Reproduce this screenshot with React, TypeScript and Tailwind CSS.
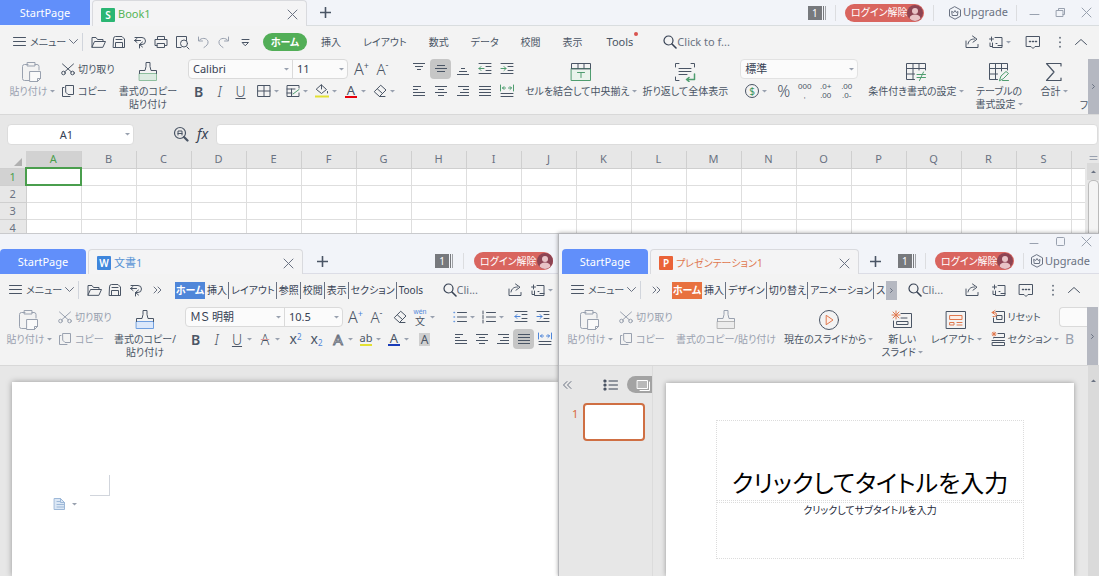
import type { ReactNode } from 'react'

const FONT = "font-['Noto_Sans','Noto_Sans_CJK_JP',sans-serif] [font-feature-settings:'palt']"

/* ---------- icons ---------- */

function Svg({ w = 16, h = 16, className = '', children }: { w?: number; h?: number; className?: string; children: ReactNode }) {
  return (
    <svg width={w} height={h} viewBox={`0 0 ${w} ${h}`} fill="none" stroke="currentColor" strokeLinecap="round" strokeLinejoin="round" className={`shrink-0 ${className}`} aria-hidden="true">
      {children}
    </svg>
  )
}

const Caret = ({ className = 'text-gray-400' }: { className?: string }) => (
  <svg width="5" height="3" viewBox="0 0 5 3" className={`inline-block shrink-0 align-middle ${className}`} aria-hidden="true">
    <path d="M0 0h5L2.500 2.500z" fill="currentColor" />
  </svg>
)

const Burger = () => <Svg w={13} h={12}><path d="M.5 1.500h12M.5 5.500h12M.5 9.500h12" /></Svg>
const ChevDown = () => <Svg w={9} h={6} className="text-gray-500"><path d="M.5.5l4 4 4-4" /></Svg>
const Folder = () => <Svg><path d="M2 13V3.500h4l1.500 2H13V7.500M2 13l2.500-5.500h11L13 13z" /></Svg>
const Save = () => <Svg><path d="M2.500 4.500a2 2 0 0 1 2-2h6.500l2.500 2.500v8.500h-11zM4.500 13.500v-5h7v5M5 5.500h6" /></Svg>
const Export = () => <Svg><path d="M3 3.500h7a3 3 0 0 1 0 7H8M8.500 6.500h-6M5 4.500l-2.500 2 2.500 2M10.500 8l-3 2.500 3 2.500M7.500 14v-3.500" /></Svg>
const Print = () => <Svg><path d="M4.500 5.500v-3h7v3M4 11.500H2v-6h12v6h-2M4.500 9.500h7v4h-7z" /></Svg>
const Preview = () => <Svg><path d="M7 13.500H2.500v-11h10v4M13 13l2 2" /><circle cx="10" cy="9.500" r="3.500" /></Svg>
const Undo = () => <Svg className="text-gray-400"><path d="M3.500 3v4h4M4 6.500c2-3 8-3 9 1 .5 2.500-1.500 4.500-4 6" /></Svg>
const Redo = () => <Svg className="text-gray-400"><path d="M12.500 3v4h-4M12 6.500c-2-3-8-3-9 1-.5 2.500 1.500 4.500 4 6" /></Svg>
const MoreDown = () => <Svg><path d="M5 5.500h7M5.500 8.500h6l-3 3z" /></Svg>
const DoubleRight = () => <Svg className="text-gray-500"><path d="M5 5l3 3-3 3M9 5l3 3-3 3" /></Svg>
const DoubleLeft = () => <Svg className="text-gray-500"><path d="M7 4.500L3.500 8 7 11.500M11 4.500L7.500 8l3.500 3.500" /></Svg>
const Magnifier = () => <Svg w={14} h={14} className="text-gray-700"><circle cx="5.500" cy="5.500" r="4.500" strokeWidth="1.200" /><path d="M9 9l4 4" strokeWidth="1.600" /></Svg>
const Share = () => <Svg><path d="M2 7v6.500h12v-3M4 10c.5-3.500 3-5 6.500-5M8.500 2l4.500 3.200-4 3" /></Svg>
const CloudAdd = () => <Svg><path d="M7 3.500h7v10H4.500V9M1.500 5h4M3.500 3v4M10 11.500h4M8 9.500h1M2 9v3.500h2.500" /></Svg>
const Chat = () => <Svg w={18} h={17}><path d="M2.500 2.500h13v10H11l-2 2-2-2H2.500z" /><path d="M5.500 7.500h1M8.500 7.500h1M11.500 7.500h1" strokeWidth="1.500" /></Svg>
const Dots = () => <Svg><path d="M8 3.500v.5M8 8v.5M8 12.500v.5" strokeWidth="1.500" /></Svg>
const ChevUp = () => <Svg><path d="M2.500 10.500L8 5.500l5.500 5" /></Svg>
const Close = ({ className = 'text-gray-500' }: { className?: string }) => <Svg w={11} h={11} className={className}><path d="M1 1l9 9M10 1l-9 9" /></Svg>
const Plus = () => <Svg w={11} h={11} className="text-gray-600"><path d="M5.500.5v10M.5 5.500h10" strokeWidth="1.600" /></Svg>
const Hexagon = () => <Svg w={14} h={14}><path d="M7 .8l5.500 3v6.400L7 13.200 1.500 10.200V3.800z" /><path d="M4 5.500l1.700 1L7 4.500l1.300 2 1.700-1-.6 4H4.600z" /></Svg>

const Clipboard = () => (
  <Svg w={22} h={22}>
    <path d="M7 3.500H3.500a2 2 0 0 0-2 2v12a2 2 0 0 0 2 2H8M14 3.500h2a2 2 0 0 1 2 2V9" />
    <path d="M6.500 1.500h7.500v3.500H6.500z" />
    <path d="M9 10.500h10.500v7l-3 3H9z" fill="#fafafa" />
    <path d="M19.500 17.500h-3v3" />
  </Svg>
)
const Cut = () => <Svg><path d="M2.500 3l9 8M13.500 3l-9 8" /><circle cx="3.500" cy="12" r="1.800" /><circle cx="12.500" cy="12" r="1.800" /></Svg>
const Copy = () => <Svg><path d="M6 2.500h7.500v9H8l-2-2zM4 4.500H2.500v9H10" /></Svg>

function Brush({ fill, edge }: { fill: string; edge: string }) {
  return (
    <Svg w={22} h={22}>
      <path d="M2.500 12.500h17v7h-17z" fill={fill} stroke={edge} />
      <path d="M2.500 12.500v-3H8l1-4V1.500h4v4l1 4h5.500v3" />
    </Svg>
  )
}

/* each row is [from, to] on a 14px wide box */
function Lines({ rows, top = 2, step = 3 }: { rows: number[][]; top?: number; step?: number }) {
  return (
    <Svg w={14} h={14}>
      {rows.map(([a, b], i) => <path key={i} d={`M${a} ${top + 0.5 + i * step}H${b}`} strokeLinecap="butt" />)}
    </Svg>
  )
}
const AlignTop = () => <Lines rows={[[1, 13], [3, 11], [5, 9]]} top={1} />
const AlignMiddle = () => <Lines rows={[[3, 11], [1, 13], [3, 11]]} top={3} />
const AlignBottom = () => <Lines rows={[[5, 9], [3, 11], [1, 13]]} top={6} />
const AlignLeft = () => <Lines rows={[[1, 9], [1, 6], [1, 13], [1, 13]]} />
const AlignCenter = () => <Lines rows={[[1, 13], [4, 10], [1, 13], [4, 10]]} />
const AlignRight = () => <Lines rows={[[2, 13], [7, 13], [4, 13], [1, 13]]} />
const Justify = () => <Lines rows={[[1, 13], [1, 13], [1, 13], [1, 13]]} />
const Distribute = ({ tint }: { tint: string }) => (
  <Svg w={14} h={14}><g stroke={tint}><path d="M.5 1v6M13.500 1v6M2.500 4h3M8.500 4h3M4 2.500L2.500 4 4 5.500M10 2.500l1.500 1.500L10 5.500" /></g><path d="M1 9.500h12M1 12.500h12" /></Svg>
)
const Indent = ({ tint, out = false }: { tint: string; out?: boolean }) => (
  <Svg w={14} h={14}>
    <path d="M1 1.500h12M8 4.500h5M8 8.500h5M1 11.500h12" />
    <path d={out ? 'M6 6.500H1M3 4.500l-2 2 2 2' : 'M1 6.500h5M4 4.500l2 2-2 2'} stroke={tint} />
  </Svg>
)
const Bullets = () => <Svg w={14} h={14}><path d="M4.500 2.500h9M4.500 7h9M4.500 11.500h9" /><path d="M1 2.500h.5M1 7h.5M1 11.500h.5" stroke="#6b9be0" strokeWidth="1.500" /></Svg>
const Numbers = () => <Svg w={14} h={14}><path d="M4.500 2.500h9M4.500 7h9M4.500 11.500h9M1 1v3M1 5.500v3M1 10v3" /></Svg>
const Borders = () => <Svg w={14} h={14}><path d="M1 1.500h12v11H1zM7 1.500v11M1 7h12" /></Svg>
const CellStyle = () => <Svg w={14} h={14}><path d="M13 4v-2.500H1v11h12V9M1 5h8M5.500 12.500V5M1 9h5" /><path d="M7 10l6-4.500" stroke="#4f9d6f" /></Svg>
const Bucket = () => <Svg w={14} h={14}><path d="M6.500 1l5 4.500-5 4-5-4zM6.500 1v4M12.500 7.500v1.500" /><path d="M0 12.500h14" stroke="#e3e033" strokeWidth="2" strokeLinecap="butt" /></Svg>
const Rubber = () => <Svg w={14} h={14}><path d="M8 1.500l5 4.500-6.500 6.500L1.500 8zM4.500 5l5 4.500M6.500 12.500H12" /></Svg>

const MergeCells = () => (
  <Svg w={22} h={20}><g stroke="#4f9d6f"><path d="M1.500 6.500h19v12h-19z" fill="#eaf4ec" /><path d="M7.500 10.500h7M11 10.500v5" /></g><path d="M1.500 6.500v-5h19v5zM8 1.500v5M14 1.500v5" /></Svg>
)
const WrapText = () => (
  <Svg w={22} h={20}><path d="M1.500 5V1.500H5M17 1.500h3.500V5M1.500 15v3.500H5M5 6.500h12M5 9.500h12M5 12.500h8" /><path d="M20.500 12v5.500H13M15 15.500l-2.500 2 2.500 2" stroke="#4f9d6f" strokeWidth="1.500" /></Svg>
)
const CondFormat = () => (
  <Svg w={22} h={20}><path d="M20.500 8V1.500h-19v16h8M1.500 6.500h19M8 1.500v16M1.500 12h8M14 1.500V8" /><path d="M12 12.500h8.500M12 15.500h8.500M18.500 10l-4 8.500" stroke="#4f9d6f" /></Svg>
)
const TableFormat = () => (
  <Svg w={22} h={20}><path d="M19.500 8V1.500h-18v16h8M1.500 6.500h18M7.500 1.500v16M1.500 12h8M13.500 1.500V9" /><path d="M11.500 18.500l1.500-4.500 5-4.500 2.500 2-5 5zM14.500 18.500h6" stroke="#4f9d6f" /></Svg>
)
const Sum = () => <Svg w={18} h={20}><path d="M16 4V1.500H1.500L9 10l-7.500 8.500H16V16" strokeWidth="1.200" /></Svg>
const Play = () => <Svg w={22} h={22}><circle cx="11" cy="11" r="9.500" /><path d="M8.500 6.500l6.500 4.500-6.500 4.500z" stroke="#e0784e" fill="#fdeee7" /></Svg>
const NewSlide = () => (
  <Svg w={22} h={20}><path d="M10 3.500h10.500v14h-18V11M10 8h6M6 11.500h11v3H6z" /><path d="M5 1v8M1 5h8M2 2l6 6M8 2L2 8" stroke="#e0784e" /></Svg>
)
const LayoutIcon = () => (
  <Svg w={22} h={20}><path d="M1.500 1.500h19v17h-19z" /><g stroke="#e0784e"><path d="M5 5.500h12v4H5z" fill="#fdeee7" /><path d="M5 12.500h4v2.500H5zM12 12.500h5M12 15h5" /></g></Svg>
)
const Reset = () => <Svg><path d="M6 2.500h8.500v11h-11V9M7 6.500h5v4H7z" /><path d="M5 1.500l-3 2 3 2M2 3.500h2.500a2 2 0 0 1 0 4H3" stroke="#e0784e" /></Svg>
const Section = () => <Svg><path d="M8 2.500h6.500v4H3.500V7M2 9.500h12.500M2.500 11.500h12v3h-12z" /><path d="M4 1v4M2 3h4M2.500 1.500l3 3M5.500 1.500l-3 3" stroke="#e0784e" /></Svg>
const Outline = () => (
  <Svg w={15} h={12}><g strokeWidth="1.200"><circle cx="2" cy="2" r="1" /><circle cx="2" cy="6" r="1" /><circle cx="2" cy="10" r="1" /></g><path d="M6 2h8.500M6 6h8.500M6 10h8.500" /></Svg>
)
const FindCell = () => <Svg><circle cx="7" cy="7" r="5.500" strokeWidth="1.200" /><path d="M5 9V5h4v4M5 7.500h4" /><path d="M11 11l3.500 3.500" strokeWidth="2.200" /></Svg>

/* ---------- shared pieces ---------- */

function IconButton({ label, active = false, children }: { label: string; active?: boolean; children: ReactNode }) {
  return (
    <button aria-label={label} className={`flex h-5 w-[21px] shrink-0 items-center justify-center rounded-sm text-gray-600 ${active ? 'bg-[#c6c6c6]' : ''}`}>
      {children}
    </button>
  )
}

function SplitButton({ label, children }: { label: string; children: ReactNode }) {
  return (
    <button aria-label={label} className="flex h-5 w-7 shrink-0 items-center gap-[2px] text-gray-600">
      <span className="flex w-4 justify-center">{children}</span>
      <Caret />
    </button>
  )
}

function BigButton({ icon, lines, caret = false, disabled = false, className = '' }: { icon: ReactNode; lines: string[]; caret?: boolean; disabled?: boolean; className?: string }) {
  return (
    <button disabled={disabled} className={`flex shrink-0 flex-col items-center whitespace-nowrap ${disabled ? 'text-gray-400' : 'text-gray-600'} ${className}`}>
      <span className="flex h-[26px] items-center">{icon}</span>
      {lines.map((line, i) => (
        <span key={line} className="text-[10px] leading-[13px]">
          {line}
          {caret && i === lines.length - 1 && <Caret className="mb-[2px] ml-[2px] text-gray-400" />}
        </span>
      ))}
    </button>
  )
}

function ClipGroup({ disabled = false }: { disabled?: boolean }) {
  const tone = disabled ? 'text-gray-400' : 'text-gray-600'
  return (
    <div className="ml-[6px] flex w-[58px] shrink-0 flex-col gap-[2px] whitespace-nowrap">
      <button disabled={disabled} className={`flex h-5 items-center gap-[2px] text-[10px] ${tone}`}><Cut />切り取り</button>
      <button disabled={disabled} className={`flex h-5 items-center gap-[2px] text-[10px] ${tone}`}><Copy />コピー</button>
    </div>
  )
}

function Picker({ label, value, className = '' }: { label: string; value: string; className?: string }) {
  return (
    <label className={`relative flex h-5 items-center ${className}`}>
      <select aria-label={label} className="h-full w-full appearance-none bg-transparent pl-1 text-[11px] text-gray-700 outline-none">
        <option>{value}</option>
      </select>
      <span className="pointer-events-none absolute inset-y-0 right-[3px] flex items-center"><Caret /></span>
    </label>
  )
}

function FontPickers({ font, size, first, second }: { font: string; size: string; first: string; second: string }) {
  return (
    <div className="flex rounded border border-[#dadada] bg-[#fbfbfb]">
      <Picker label="フォント" value={font} className={`-my-px border-r border-[#dadada] ${first}`} />
      <Picker label="サイズ" value={size} className={`-my-px ${second}`} />
    </div>
  )
}

const Letter = ({ children, className = 'text-[14px] leading-[14px]' }: { children: ReactNode; className?: string }) => (
  <span className={`font-['Noto_Sans'] ${className}`}>{children}</span>
)

const GrowFont = ({ tint }: { tint: string }) => (
  <span className="flex items-start"><Letter className="text-[16px] leading-4 font-light">A</Letter><span className={`text-[9px] leading-[9px] ${tint}`}>+</span></span>
)
const ShrinkFont = () => (
  <span className="flex items-start"><Letter className="text-[15px] leading-4 font-light">A</Letter><span className="text-[9px] leading-[7px]">-</span></span>
)

/* two short rows of digits */
const Digits = ({ top, bottom }: { top: string; bottom: string }) => (
  <span className="flex flex-col font-['Liberation_Sans'] text-[8px] leading-[9px]"><span>{top}</span><span>{bottom}</span></span>
)

const MenuButton = () => (
  <button className="flex h-[18px] w-[70px] shrink-0 items-center border-r border-gray-300 text-[10px] whitespace-nowrap text-gray-600">
    <Burger />
    <span className="mr-[3px] ml-1">メニュー</span>
    <ChevDown />
  </button>
)

function SearchBox({ hint, width }: { hint: string; width: string }) {
  return (
    <label className="flex shrink-0 items-center">
      <Magnifier />
      <input aria-label="検索" placeholder={hint} className={`bg-transparent text-[11px] outline-none placeholder:text-gray-500 ${width}`} />
    </label>
  )
}

const StartTab = ({ className }: { className: string }) => (
  <button className={`h-[25px] shrink-0 bg-[#618ffa] pt-[2px] text-[11px] text-white ${className}`}>StartPage</button>
)

function FileTab({ mark, name, logo, tone, width }: { mark: string; name: string; logo: string; tone: string; width: string }) {
  return (
    <div className={`ml-[2px] flex h-[25px] shrink-0 items-center rounded-t-sm border border-b-0 border-[#d9dade] bg-[#f4f4f5] px-2 pt-[2px] ${width}`}>
      <span className={`flex size-[14px] items-center justify-center rounded-[1px] font-['Noto_Sans'] text-[10px] leading-none font-semibold text-white ${logo}`}>{mark}</span>
      <a href="#" className={`ml-[3px] whitespace-nowrap ${tone}`}>{name}</a>
      <button aria-label="閉じる" className="ml-auto"><Close /></button>
    </div>
  )
}

const Badge = () => (
  <button className="flex h-[14px] shrink-0 items-center gap-px text-[10px] leading-[14px] text-white">
    <span className="w-[14px] bg-[#77797d] text-center">1</span>
    <span className="h-full w-px bg-[#77797d]" />
    <span className="h-full w-px bg-[#a0a2a6]" />
  </button>
)

const LoginButton = () => (
  <button className="flex h-[18px] w-[79px] shrink-0 items-center justify-between rounded-full bg-[#d9655f] pr-px pl-[6px] text-[10px] whitespace-nowrap text-white">
    ログイン解除
    <svg width="16" height="16" viewBox="0 0 16 16" className="shrink-0" aria-hidden="true">
      <circle cx="8" cy="8" r="8" fill="#8d4453" />
      <circle cx="8" cy="6" r="3" fill="#e9c3c6" />
      <path d="M2.500 13.500c.5-3 2.500-4 5.500-4s5 1 5.500 4A8 8 0 0 1 8 16a8 8 0 0 1-5.500-2.500z" fill="#e9c3c6" />
    </svg>
  </button>
)

const Rule = ({ className = '' }: { className?: string }) => <span className={`h-4 w-px shrink-0 bg-[#dcdde0] ${className}`} />

const Upgrade = () => (
  <a href="#" className="flex items-center gap-px text-[11px] text-gray-500"><Hexagon />Upgrade</a>
)

const ScrollRight = ({ className = '' }: { className?: string }) => (
  <button aria-label="次へ" className={`flex w-[11px] shrink-0 items-center justify-center bg-[#b5b8c1] text-gray-500 ${className}`}>
    <Svg w={5} h={7}><path d="M1.500 1.500l2 2-2 2" /></Svg>
  </button>
)

function RibbonTabs({ tabs, fill }: { tabs: string[]; fill: string }) {
  return (
    <nav className="flex shrink-0 items-center text-[10px] leading-[17px] whitespace-nowrap text-gray-700">
      <button className={`h-[17px] w-[30px] font-bold text-white ${fill}`}>ホーム</button>
      {tabs.map((t, i) => (
        <button key={t} className={`h-[17px] pr-px pl-[2px] ${i < tabs.length - 1 ? 'border-r border-gray-500' : ''}`}>{t}</button>
      ))}
    </nav>
  )
}

/* ---------- spreadsheet ---------- */

const COLUMNS = 'ABCDEFGHIJKLMNOPQRS'.split('')
const SHEET_TABS = ['挿入', 'レイアウト', '数式', 'データ', '校閲', '表示']

function Spreadsheet() {
  return (
    <section className="flex h-[233px] shrink-0 flex-col overflow-hidden bg-[#f3f3f3]">
      <header className="flex h-[26px] shrink-0 items-end bg-[#f2f4f9]">
        <StartTab className="mb-px w-[90px]" />
        <FileTab mark="S" name="Book1" logo="bg-[#2bb673]" tone="text-[11px] text-[#55b455]" width="h-[26px] w-[215px]" />
        <div className="flex h-[26px] flex-1 items-center border-b border-[#d9dddf]">
          <button aria-label="新規" className="flex w-[37px] justify-center"><Plus /></button>
          <div className="ml-auto flex items-center">
            <Badge />
            <Rule className="mx-[9px]" />
            <LoginButton />
            <Rule className="mr-[14px] ml-[9px]" />
            <Upgrade />
            <Rule className="ml-2" />
            <div className="ml-1 flex text-gray-400">
              <button aria-label="最小化" className="flex w-[26px] items-center justify-center"><Svg w={11} h={11}><path d="M1 7.500h9" /></Svg></button>
              <button aria-label="元に戻す" className="flex w-[26px] items-center justify-center"><Svg w={11} h={11}><path d="M1.500 3.500h6.500v6H1.500zM3.500 3.500v-2h6v6H8" /></Svg></button>
              <button aria-label="閉じる" className="flex w-[26px] items-center justify-center"><Close className="text-gray-400" /></button>
            </div>
          </div>
        </div>
      </header>

      <div className="flex h-8 shrink-0 items-center pl-[13px] text-gray-600">
        <MenuButton />
        <div className="ml-1 flex">
          <IconButton label="開く"><Folder /></IconButton>
          <IconButton label="保存"><Save /></IconButton>
          <IconButton label="エクスポート"><Export /></IconButton>
          <IconButton label="印刷"><Print /></IconButton>
          <IconButton label="プレビュー"><Preview /></IconButton>
          <IconButton label="元に戻す"><Undo /></IconButton>
          <IconButton label="やり直し"><Redo /></IconButton>
          <IconButton label="その他"><MoreDown /></IconButton>
        </div>
        <nav className="ml-2 flex items-center gap-[22px] text-[10px] whitespace-nowrap text-gray-600">
          <button className="-mr-2 h-[18px] w-11 rounded-full bg-[#52ae57] font-bold text-white">ホーム</button>
          {SHEET_TABS.map((t) => <button key={t}>{t}</button>)}
          <button className="relative ml-[2px] text-[11px]">
            Tools
            <span className="absolute -top-[2px] -right-[5px] size-1 rounded-full bg-[#d9534f]" />
          </button>
        </nav>
        <div className="ml-[30px]"><SearchBox hint="Click to f..." width="w-[60px]" /></div>
        <div className="mr-2 ml-auto flex items-center gap-[6px]">
          <IconButton label="共有"><Share /></IconButton>
          <SplitButton label="クラウド"><CloudAdd /></SplitButton>
          <IconButton label="コメント"><Chat /></IconButton>
          <div className="flex">
            <IconButton label="オプション"><Dots /></IconButton>
            <IconButton label="リボンを隠す"><ChevUp /></IconButton>
          </div>
        </div>
      </div>

      <div className="flex h-[57px] shrink-0 items-start border-b border-[#d8d8d8] pt-px pl-[10px]">
        <BigButton icon={<Clipboard />} lines={['貼り付け']} caret disabled className="w-11" />
        <ClipGroup />
        <BigButton icon={<Brush fill="#dcebe1" edge="#8fbf9f" />} lines={['書式のコピー', '貼り付け']} className="w-[60px]" />
        <div className="ml-[10px] flex flex-col gap-[2px]">
          <div className="flex items-center">
            <FontPickers font="Calibri" size="11" first="w-[104px]" second="w-[54px]" />
            <div className="w-[3px]" />
            <IconButton label="拡大"><GrowFont tint="" /></IconButton>
            <IconButton label="縮小"><ShrinkFont /></IconButton>
          </div>
          <div className="flex items-center">
            <IconButton label="太字"><Letter className="text-[14px] font-semibold">B</Letter></IconButton>
            <IconButton label="斜体"><Letter className="text-[14px] font-light italic">I</Letter></IconButton>
            <IconButton label="下線"><Letter className="text-[14px] font-light underline">U</Letter></IconButton>
            <div className="ml-[5px] flex gap-px">
              <SplitButton label="罫線"><Borders /></SplitButton>
              <SplitButton label="セルのスタイル"><CellStyle /></SplitButton>
              <SplitButton label="塗りつぶし"><Bucket /></SplitButton>
              <SplitButton label="文字の色"><Letter className="border-b-2 border-red-600 px-[2px] text-[13px] leading-[12px]">A</Letter></SplitButton>
              <SplitButton label="クリア"><Rubber /></SplitButton>
            </div>
          </div>
        </div>
        <div className="ml-2 grid grid-cols-5 gap-x-px gap-y-[2px]">
          <IconButton label="上揃え"><AlignTop /></IconButton>
          <IconButton label="上下中央" active><AlignMiddle /></IconButton>
          <IconButton label="下揃え"><AlignBottom /></IconButton>
          <IconButton label="インデント解除"><Indent tint="#4f9d6f" out /></IconButton>
          <IconButton label="インデント"><Indent tint="#4f9d6f" /></IconButton>
          <IconButton label="左揃え"><AlignLeft /></IconButton>
          <IconButton label="中央揃え"><AlignCenter /></IconButton>
          <IconButton label="右揃え"><AlignRight /></IconButton>
          <IconButton label="両端揃え"><Justify /></IconButton>
          <IconButton label="均等割り付け"><Distribute tint="#4f9d6f" /></IconButton>
        </div>
        <div className="ml-2 flex gap-[6px]">
          <BigButton icon={<MergeCells />} lines={['セルを結合して中央揃え']} caret />
          <BigButton icon={<WrapText />} lines={['折り返して全体表示']} />
        </div>
        <div className="ml-3 flex flex-col gap-[2px]">
          <div className="rounded border border-[#e2e2e2] bg-[#fbfbfb]">
            <Picker label="表示形式" value="標準" className="-my-px w-[116px]" />
          </div>
          <div className="flex items-center pl-1">
            <div className="flex w-[29px]">
              <SplitButton label="通貨">
                <span className="flex size-[14px] items-center justify-center rounded-full border border-gray-600 text-[10px] leading-none text-[#3f9560]">$</span>
              </SplitButton>
            </div>
            <IconButton label="パーセント"><Letter className="text-[16px] font-light">%</Letter></IconButton>
            <IconButton label="桁区切り"><Digits top="000" bottom="," /></IconButton>
            <IconButton label="小数点以下を増やす"><Digits top=".0+" bottom=".00" /></IconButton>
            <IconButton label="小数点以下を減らす"><Digits top=".00" bottom=".0-" /></IconButton>
          </div>
        </div>
        <div className="ml-[10px] flex min-w-0 flex-1 gap-3">
          <BigButton icon={<CondFormat />} lines={['条件付き書式の設定']} caret />
          <BigButton icon={<TableFormat />} lines={['テーブルの', '書式設定']} caret />
          <BigButton icon={<Sum />} lines={['合計']} caret className="ml-[6px]" />
          <span className="mt-10 ml-auto text-[10px] leading-[13px] text-gray-600">フ</span>
        </div>
        <ScrollRight className="h-[55px]" />
      </div>

      <div className="flex h-9 shrink-0 items-center bg-[#e7e7e7] pt-[2px] pr-px pl-[7px]">
        <label className="relative flex w-[127px] shrink-0 items-center">
          <input aria-label="名前ボックス" defaultValue="A1" className="h-[21px] w-full rounded border border-[#dcdcdc] bg-white pr-2 text-center text-[11px] text-gray-700 outline-none" />
          <span className="absolute right-1 flex"><Caret /></span>
        </label>
        <button aria-label="セルを検索" className="ml-[39px] text-gray-600"><FindCell /></button>
        <button aria-label="関数の挿入" className="mx-2 font-['Noto_Sans'] text-[14px] leading-none text-gray-700 italic">fx</button>
        <input aria-label="数式バー" className="h-[21px] min-w-0 flex-1 rounded border border-[#dcdcdc] bg-white px-1 text-[11px] outline-none" />
      </div>

      <div className="flex min-h-0 flex-1 bg-[#e7e7e7]">
        <div className="min-w-0 flex-1 overflow-hidden">
          <table className="w-full table-fixed border-collapse bg-white text-[11px] leading-4 text-gray-500">
            <thead>
              <tr className="h-[17px] bg-[#e7e7e7]">
                <th aria-label="すべて選択" className="w-[26px] border-b border-[#cfcfcf]">
                  <svg width="8" height="8" viewBox="0 0 8 8" className="mt-[5px] mr-1 ml-auto" aria-hidden="true"><path d="M8 0v8H0z" fill="#b0b0b0" /></svg>
                </th>
                {COLUMNS.map((c, i) => (
                  <th key={c} className={`w-[55px] border-r border-b border-[#cfcfcf] font-normal ${i === 0 ? 'bg-[#d2d2d2] text-[#4a9e4d]' : ''}`}>{c}</th>
                ))}
                <th className="border-b border-[#cfcfcf]" />
              </tr>
            </thead>
            <tbody>
              {[1, 2, 3, 4].map((r) => (
                <tr key={r} className="h-[17px]">
                  <th className={`border-r border-b border-[#cfcfcf] font-normal ${r === 1 ? 'bg-[#d2d2d2] text-[#4a9e4d]' : 'bg-[#e7e7e7]'}`}>{r}</th>
                  {COLUMNS.map((c, i) => (
                    <td key={c} className={`border-r border-b border-[#dedede] ${r === 1 && i === 0 ? 'outline-2 -outline-offset-1 outline-[#4a9e4d]' : ''}`} />
                  ))}
                  <td className="border-b border-[#dedede]" />
                </tr>
              ))}
            </tbody>
          </table>
        </div>
        <div className="ml-[2px] flex w-3 shrink-0 flex-col items-center text-gray-400">
          <Svg w={9} h={12}><path d="M1 5.500h7M1 8.500h7" /></Svg>
          <button aria-label="上へスクロール" className="flex h-[17px] w-full items-center justify-center bg-[#dadada]"><Caret className="rotate-180 text-gray-500" /></button>
          <div className="w-[11px] flex-1 rounded-t-[5px] border border-b-0 border-[#bbb] bg-[#f4f4f4]" />
        </div>
      </div>
    </section>
  )
}

/* ---------- writer ---------- */

function Writer() {
  return (
    <section className="flex min-w-0 flex-col overflow-hidden border-t border-[#c9cacd] bg-[#f3f3f3]">
      <header className="flex h-10 shrink-0 items-end bg-[#f2f4f9]">
        <StartTab className="w-[86px] rounded-t-sm" />
        <FileTab mark="W" name="文書1" logo="bg-[#3f86dc]" tone="text-[11px] text-[#5a95d6]" width="w-[215px]" />
        <div className="flex h-[25px] flex-1 items-center border-b border-[#dcdde6]">
          <button aria-label="新規" className="flex w-[38px] justify-center"><Plus /></button>
          <div className="mr-[5px] ml-auto flex items-center">
            <Badge />
            <Rule className="mx-[10px]" />
            <LoginButton />
          </div>
        </div>
      </header>

      <div className="flex h-8 shrink-0 items-center pl-[9px] text-gray-600">
        <MenuButton />
        <div className="ml-1 flex">
          <IconButton label="開く"><Folder /></IconButton>
          <IconButton label="保存"><Save /></IconButton>
          <IconButton label="エクスポート"><Export /></IconButton>
          <IconButton label="その他"><DoubleRight /></IconButton>
        </div>
        <div className="w-2" />
        <RibbonTabs tabs={['挿入', 'レイアウト', '参照', '校閲', '表示', 'セクション', 'Tools']} fill="bg-[#4f86d9]" />
        <div className="ml-auto"><SearchBox hint="Cli..." width="w-[30px]" /></div>
        <div className="ml-auto flex items-center gap-1">
          <IconButton label="共有"><Share /></IconButton>
          <SplitButton label="クラウド"><CloudAdd /></SplitButton>
        </div>
      </div>

      <div className="flex h-[60px] shrink-0 items-start border-b border-[#d8d8d8] pt-px pl-[7px]">
        <BigButton icon={<Clipboard />} lines={['貼り付け']} caret disabled className="w-11" />
        <ClipGroup disabled />
        <BigButton icon={<Brush fill="#dbe8fb" edge="#6f9fe0" />} lines={['書式のコピー/', '貼り付け']} className="w-[60px]" />
        <div className="ml-[10px] flex flex-col gap-[2px]">
          <div className="flex items-center">
            <FontPickers font="ＭＳ 明朝" size="10.5" first="w-[99px]" second="w-[57px]" />
            <div className="w-[2px]" />
            <IconButton label="拡大"><GrowFont tint="text-[#4f86d9]" /></IconButton>
            <IconButton label="縮小"><ShrinkFont /></IconButton>
            <div className="w-[2px]" />
            <IconButton label="クリア"><Rubber /></IconButton>
            <div className="w-[2px]" />
            <SplitButton label="ルビ">
              <span className="flex flex-col items-center"><span className="h-[7px] font-['Liberation_Sans'] text-[7px] leading-[7px] text-[#4f86d9]">wén</span><span className="h-[11px] text-[10px] leading-[12px]">文</span></span>
            </SplitButton>
          </div>
          <div className="flex items-center">
            <IconButton label="太字"><Letter className="text-[14px] font-semibold">B</Letter></IconButton>
            <IconButton label="斜体"><Letter className="text-[14px] font-light italic">I</Letter></IconButton>
            <div className="w-[2px]" />
            <SplitButton label="下線"><Letter className="text-[14px] font-light underline">U</Letter></SplitButton>
            <SplitButton label="取り消し線"><Letter className="text-[14px] font-light line-through decoration-[#d99]">A</Letter></SplitButton>
            <IconButton label="上付き"><Letter>x<sup className="text-[8px] text-[#4f86d9]">2</sup></Letter></IconButton>
            <IconButton label="下付き"><Letter>x<sub className="text-[8px] text-[#4f86d9]">2</sub></Letter></IconButton>
            <div className="w-[3px]" />
            <SplitButton label="文字の効果"><Letter className="text-[15px] text-white [-webkit-text-stroke:1px_#6b7280]">A</Letter></SplitButton>
            <SplitButton label="蛍光ペン"><Letter className="border-b-2 border-[#e3e033] text-[11px] leading-[12px]">ab</Letter></SplitButton>
            <SplitButton label="文字の色"><Letter className="border-b-2 border-blue-800 px-[2px] text-[13px] leading-[12px]">A</Letter></SplitButton>
            <IconButton label="文字の網かけ"><Letter className="bg-[#cfcfcf] px-[2px] text-[12px] leading-[13px]">A</Letter></IconButton>
          </div>
        </div>
        <div className="ml-[10px] flex flex-col gap-[2px]">
          <div className="flex items-center gap-px pl-[2px]">
            <SplitButton label="箇条書き"><Bullets /></SplitButton>
            <SplitButton label="段落番号"><Numbers /></SplitButton>
            <IconButton label="インデント解除"><Indent tint="#4f86d9" out /></IconButton>
            <IconButton label="インデント"><Indent tint="#4f86d9" /></IconButton>
          </div>
          <div className="flex items-center">
            <IconButton label="左揃え"><AlignLeft /></IconButton>
            <IconButton label="中央揃え"><AlignCenter /></IconButton>
            <IconButton label="右揃え"><AlignRight /></IconButton>
            <IconButton label="両端揃え" active><Justify /></IconButton>
            <IconButton label="均等割り付け"><Distribute tint="#4f86d9" /></IconButton>
          </div>
        </div>
      </div>

      <div className="flex-1 bg-[#e7e7e7] pt-4 pl-3">
        <div className="h-full bg-white pt-[93px] shadow-[0_0_6px_rgba(0,0,0,0.35)]">
          <div className="ml-[78px] h-[21px] w-5 border-r border-b border-gray-300" />
          <button aria-label="貼り付けのオプション" className="ml-10 flex items-center gap-1">
            <Svg className="text-[#9db8d8]"><path d="M2.500 2.500h6l4 4v7h-10z" fill="#dbe7f5" /><path d="M5 5.500h3M5 8.500h7M5 11h7M8.500 2.500v4h4" /></Svg>
            <Caret />
          </button>
        </div>
      </div>
    </section>
  )
}

/* ---------- presentation ---------- */

function Presentation() {
  return (
    <section className="z-10 flex min-w-0 flex-col overflow-hidden border-t border-l border-[#b4b5b9] bg-[#f3f3f3] shadow-[0_0_4px_rgba(0,0,0,0.35)]">
      <header className="shrink-0 bg-[#f2f4f9]">
        <div className="flex h-[15px] justify-end text-gray-400">
          <button aria-label="最小化" className="flex w-[26px] items-center justify-center"><Svg w={11} h={11}><path d="M1 7.500h8" /></Svg></button>
          <button aria-label="最大化" className="flex w-[26px] items-center justify-center"><Svg w={11} h={11}><rect x="1.500" y="1.500" width="8" height="8" rx="1" /></Svg></button>
          <button aria-label="閉じる" className="flex w-[26px] items-center justify-center"><Close className="text-gray-400" /></button>
        </div>
        <div className="flex items-end pl-[3px]">
          <StartTab className="w-[86px] rounded-t-sm" />
          <FileTab mark="P" name="プレゼンテーション1" logo="bg-[#ea6338]" tone="text-[10px] text-[#e0784e]" width="w-[209px]" />
          <div className="flex h-[25px] flex-1 items-center border-b border-[#dcdde6]">
            <button aria-label="新規" className="flex w-[33px] justify-center"><Plus /></button>
            <div className="mr-[9px] ml-auto flex items-center">
              <Badge />
              <Rule className="mx-[9px]" />
              <LoginButton />
              <Rule className="mr-[6px] ml-[9px]" />
              <Upgrade />
            </div>
          </div>
        </div>
      </header>

      <div className="flex h-8 shrink-0 items-center pr-[14px] pl-3 text-gray-600">
        <MenuButton />
        <div className="mr-[6px] ml-1 flex"><IconButton label="その他"><DoubleRight /></IconButton></div>
        <RibbonTabs tabs={['挿入', 'デザイン', '切り替え', 'アニメーション', 'ス']} fill="bg-[#e8713f]" />
        <ScrollRight className="h-[19px]" />
        <div className="ml-auto"><SearchBox hint="Cli..." width="w-[30px]" /></div>
        <div className="ml-auto flex items-center gap-[6px]">
          <IconButton label="共有"><Share /></IconButton>
          <IconButton label="クラウド"><CloudAdd /></IconButton>
          <IconButton label="コメント"><Chat /></IconButton>
          <div className="flex">
            <IconButton label="オプション"><Dots /></IconButton>
            <IconButton label="リボンを隠す"><ChevUp /></IconButton>
          </div>
        </div>
      </div>

      <div className="flex h-[60px] shrink-0 items-start border-b border-[#d8d8d8] pt-px pl-[9px]">
        <BigButton icon={<Clipboard />} lines={['貼り付け']} caret disabled className="w-11" />
        <ClipGroup disabled />
        <BigButton icon={<Brush fill="#ececec" edge="#b5b5b5" />} lines={['書式のコピー/貼り付け']} disabled />
        <div className="ml-2 flex min-w-0 flex-1 gap-2">
          <BigButton icon={<Play />} lines={['現在のスライドから']} caret />
          <BigButton icon={<NewSlide />} lines={['新しい', 'スライド']} caret />
          <BigButton icon={<LayoutIcon />} lines={['レイアウト']} caret />
          <div className="flex flex-col gap-[2px]">
            <button className="flex h-5 items-center gap-[2px] text-[10px] whitespace-nowrap text-gray-600"><Reset />リセット</button>
            <button className="flex h-5 items-center gap-[2px] text-[10px] whitespace-nowrap text-gray-600"><Section />セクション<Caret /></button>
          </div>
        </div>
        <div className="flex shrink-0 flex-col gap-[2px]">
          <input aria-label="フォント" className="h-5 w-7 rounded-l border border-r-0 border-[#dadada] bg-[#fbfbfb]" />
          <button aria-label="太字" className="flex h-5 w-[21px] items-center justify-center text-gray-400"><Letter>B</Letter></button>
        </div>
        <ScrollRight className="h-[58px]" />
        <div className="w-px" />
      </div>

      <div className="flex min-h-0 flex-1 bg-[#e7e7e7]">
        <aside className="w-[94px] shrink-0 border-r border-[#dcdcdc] pt-[10px]">
          <div className="flex h-[17px] items-center text-gray-700">
            <button aria-label="パネルを閉じる" className="ml-px"><DoubleLeft /></button>
            <button aria-label="アウトライン" className="ml-[27px]"><Outline /></button>
            <button aria-label="スライド" className="ml-auto flex h-[17px] w-[25px] items-center justify-end rounded-l-full bg-[#a3a3a3] pr-px text-white">
              <Svg><path d="M2.500 3.500h10v8h-10z" fill="#b9b9b9" /><path d="M14.500 5v8.500H5" /></Svg>
            </button>
          </div>
          <div className="mt-[10px] flex pl-[13px] text-[11px] text-[#d9693a]">
            <span className="mt-[3px] w-[11px]">1</span>
            <button aria-label="スライド 1" className="h-[38px] w-[62px] rounded-sm border-2 border-[#cf6f43] bg-white" />
          </div>
        </aside>
        <main className="flex flex-1 justify-center pt-[17px] pr-[14px] pl-[13px]">
          <div className="flex-1 bg-white px-[50px] pt-[37px] shadow-[0_0_5px_rgba(0,0,0,0.35)]">
            <div className="flex h-[81px] items-end justify-center border border-dotted border-[#dcdcdc] pb-px">
              <h1 className="text-[24px] leading-8 font-normal whitespace-nowrap text-black">クリックしてタイトルを入力</h1>
            </div>
            <p className="mt-px h-[57px] border border-dotted border-[#dcdcdc] text-center text-[10px] leading-[14px] whitespace-nowrap text-gray-800">クリックしてサブタイトルを入力</p>
          </div>
        </main>
        <div className="flex w-[11px] shrink-0 justify-center bg-[#dadada] pt-2">
          <button aria-label="上へスクロール" className="h-2 leading-none"><Caret className="mb-[6px] rotate-180 text-gray-500" /></button>
        </div>
      </div>
    </section>
  )
}

export default function App() {
  return (
    <div className={`flex h-screen flex-col overflow-hidden ${FONT}`}>
      <Spreadsheet />
      <div className="grid min-h-0 flex-1 grid-cols-[558fr_541fr]">
        <Writer />
        <Presentation />
      </div>
    </div>
  )
}
